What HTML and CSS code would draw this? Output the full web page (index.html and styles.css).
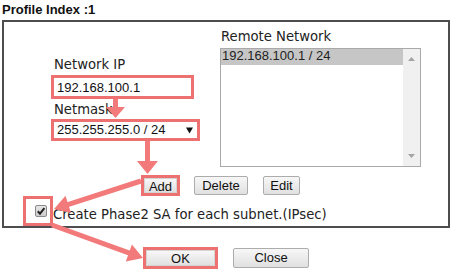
FILE: index.html
```html
<!DOCTYPE html>
<html>
<head>
<meta charset="utf-8">
<title>Profile Index</title>
<link rel="stylesheet" href="styles.css">
</head>
<body>
<div class="page">
  <div class="title">Profile Index :1</div>
  <div class="box">
    <div class="top">
      <div class="left">
        <div class="label lbl-ip">Network IP</div>
        <div class="mark mark-ip"><input class="text" type="text" value="192.168.100.1"></div>
        <div class="label lbl-mask">Netmask</div>
        <div class="mark mark-mask">
          <div class="select"><span>255.255.255.0 / 24</span><svg class="caret" width="7" height="7" viewBox="0 0 7 7"><polygon points="0,0.5 7,0.5 3.5,6.5" fill="#111"/></svg></div>
        </div>
      </div>
      <div class="right">
        <div class="label lbl-remote">Remote Network</div>
        <div class="listbox">
          <div class="items"><div class="item sel">192.168.100.1 / 24</div></div>
          <div class="scroll">
            <svg width="7" height="4" viewBox="0 0 7 4"><polygon points="0,4 7,4 3.5,0" fill="#a3a3a3"/></svg>
            <svg width="7" height="4" viewBox="0 0 7 4"><polygon points="0,0 7,0 3.5,4" fill="#a3a3a3"/></svg>
          </div>
        </div>
      </div>
    </div>
    <div class="btnrow">
      <span class="mark mark-add"><button class="btn">Add</button></span>
      <button class="btn btn-del">Delete</button>
      <button class="btn btn-edit">Edit</button>
    </div>
    <div class="chkrow">
      <span class="mark mark-chk"><span class="chk"><svg width="10" height="10" viewBox="0 0 10 10"><path d="M1.8 5.2 L4 7.6 L8.4 2.2" fill="none" stroke="#222" stroke-width="2"/></svg></span></span>
      <span class="label chk-label">Create Phase2 SA for each subnet.(IPsec)</span>
    </div>
  </div>
  <div class="actions">
    <span class="mark mark-ok"><button class="btn">OK</button></span>
    <button class="btn btn-close">Close</button>
  </div>
  <svg class="arrows" width="453" height="280" viewBox="0 0 453 280">
    <g fill="#f27a7a">
      <rect x="113" y="99" width="5" height="9"/>
      <polygon points="106,107 125,107 115.5,118"/>
      <rect x="145" y="141" width="5" height="21"/>
      <polygon points="137,161 158,161 147.5,174"/>
      <polygon points="54,209 71,213 65.5,195.8"/>
      <polygon points="143,258 125.8,261.4 131.9,244.4"/>
    </g>
    <g stroke="#f27a7a" stroke-width="5">
      <line x1="141" y1="181" x2="67" y2="204.8"/>
      <line x1="52" y1="225" x2="129.5" y2="253.2"/>
    </g>
  </svg>
</div>
</body>
</html>
```
FILE: styles.css
```css
* { box-sizing: border-box; }
html, body { margin: 0; padding: 0; background: #fff; }
.page { position: relative; width: 453px; height: 280px; }

.title {
  font: bold 13px "Liberation Sans", Arial, sans-serif;
  line-height: 16px;
  height: 18px;
  padding: 2px 0 0 2px;
  margin-bottom: 2px;
  color: #111;
}

.box {
  margin-left: 2px;
  width: 448px;
  height: 208px;
  border: 2px solid #4d4d4d;
}

.top { display: flex; height: 145px; }
.left { margin-left: 47px; width: 169px; padding-top: 35px; }
.right { padding-top: 7px; }

.label {
  font-family: "DejaVu Sans", Verdana, sans-serif;
  font-size: 13.2px;
  line-height: 16px;
  color: #222;
  white-space: nowrap;
}
.lbl-ip { padding-left: 3px; height: 16px; margin-bottom: 2px; }
.lbl-mask { padding-left: 3px; height: 16px; margin-top: 3px; margin-bottom: 1px; }
.lbl-remote { padding-left: 1px; height: 16px; margin-bottom: 3px; }

.mark { display: block; border: 3px solid #ed7171; }
.mark-ip { width: 143px; height: 24px; }
.mark-mask { width: 149px; height: 22px; }

.text {
  display: block;
  width: 100%;
  height: 100%;
  border: 0;
  margin: 0;
  padding: 0 0 0 3px;
  font: 13px "Liberation Sans", Arial, sans-serif;
  color: #111;
  background: #fff;
  outline: none;
}

.select {
  display: flex;
  align-items: center;
  justify-content: space-between;
  height: 100%;
  padding: 0 4px 0 3px;
  font: 13px "Liberation Sans", Arial, sans-serif;
  line-height: 16px;
  color: #111;
  background: #fff;
}
.caret { display: block; }

.listbox {
  display: flex;
  width: 201px;
  height: 119px;
  border: 1px solid #a9a9a9;
  background: #fff;
}
.items { flex: 1; }
.item {
  height: 16px;
  padding-left: 1px;
  font: 13px "Liberation Sans", Arial, sans-serif;
  line-height: 14px;
  color: #222;
}
.item.sel { background: #c6c6c6; }
.scroll {
  width: 17px;
  background: #f0f0f0;
  display: flex;
  flex-direction: column;
  justify-content: space-between;
  align-items: center;
  padding: 8px 0 8px;
}
.scroll svg { display: block; }

.btnrow {
  display: flex;
  align-items: center;
  margin-top: 8px;
  height: 21px;
  padding-left: 137px;
}

.btn {
  font: 13px "Liberation Sans", Arial, sans-serif;
  color: #111;
  background: linear-gradient(#f7f7f7, #e0e0e0);
  border: 1px solid #acacac;
  border-radius: 2px;
  padding: 0;
  margin: 0;
  line-height: 16px;
}
.mark .btn { display: block; width: 100%; height: 100%; border-color: #d4d4d4; border-radius: 0; }
.mark-add { width: 39px; height: 21px; }
.btn-del { margin-left: 14px; width: 54px; height: 19px; }
.btn-edit { margin-left: 15px; width: 37px; height: 19px; }

.chkrow {
  display: flex;
  height: 30px;
  padding-left: 19px;
}
.mark-chk { width: 30px; height: 30px; padding: 6px 0 0 9px; }
.chk {
  display: flex;
  align-items: center;
  justify-content: center;
  width: 12px;
  height: 12px;
  border: 1px solid #8a8a8a;
  border-radius: 2px;
  background: linear-gradient(#e6e6e6, #cdcdcd);
}
.chk svg { display: block; }
.chk-label { margin-top: 11px; }

.actions {
  display: flex;
  align-items: center;
  margin-top: 19px;
  padding-left: 143px;
  height: 22px;
}
.mark-ok { width: 75px; height: 22px; }
.btn-close { margin-left: 15px; width: 76px; height: 20px; }

.arrows { position: absolute; left: 0; top: 0; pointer-events: none; }
```
